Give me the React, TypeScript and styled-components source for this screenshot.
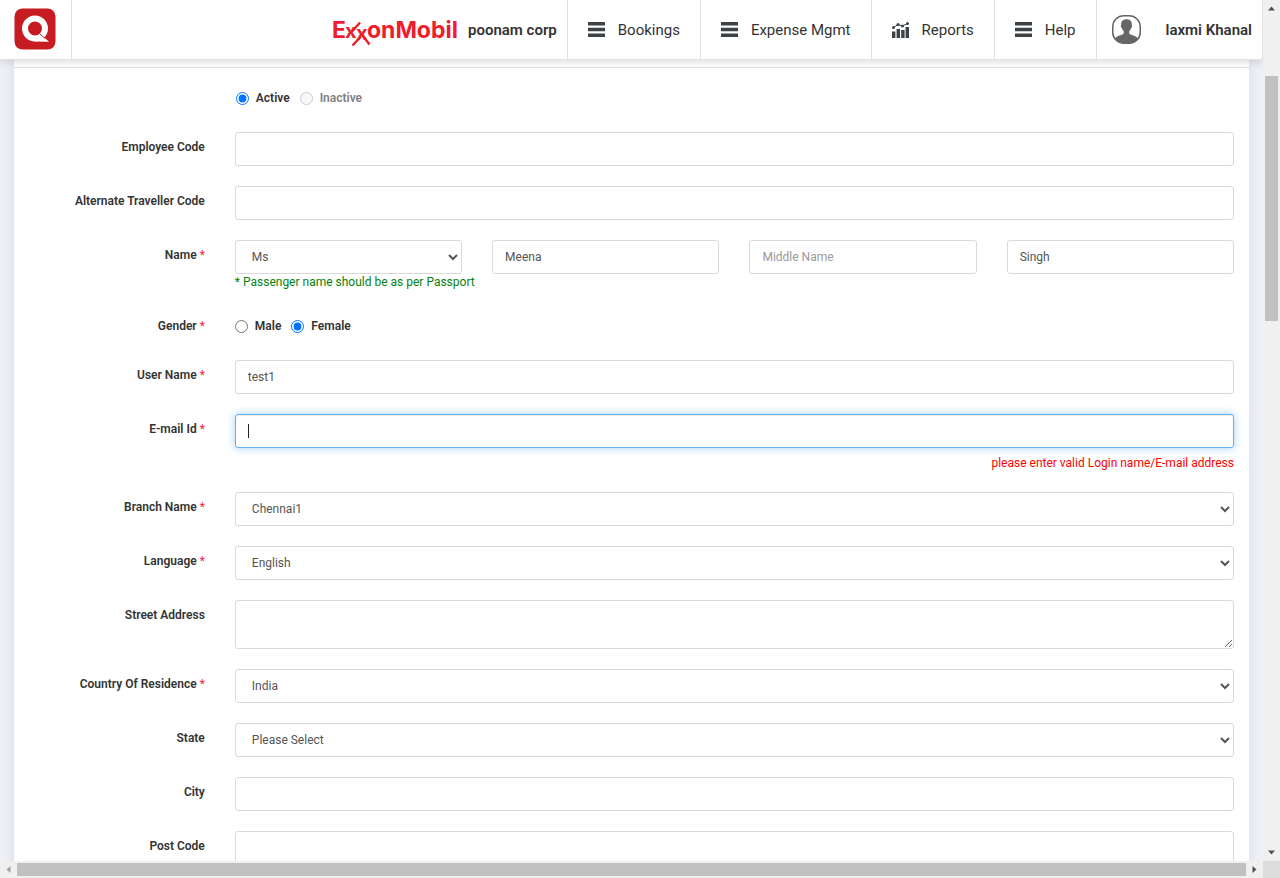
import React from 'react';
import styled, { createGlobalStyle } from 'styled-components';

const GlobalStyle = createGlobalStyle`
  * { box-sizing: border-box; }
  body {
    margin: 0;
    font-family: Roboto, "Liberation Sans", sans-serif;
    font-size: 12px;
    line-height: 18px;
    color: #333;
  }
`;

const Shell = styled.div`
  display: grid;
  grid-template-columns: minmax(0, 1fr) 17px;
  grid-template-rows: minmax(0, 1fr) 17px;
  height: 100vh;
  background: #f0f0f0;
`;

const Page = styled.div`
  display: flex;
  flex-direction: column;
  overflow: hidden;
  background: #f0f1f6;
`;

const Header = styled.header`
  flex: none;
  display: flex;
  height: 60px;
  background: #fff;
  border-bottom: 1px solid #e1e1e4;
  border-right: 1px solid #e1e1e4;
  box-shadow: 0 2px 8px rgba(0, 0, 0, 0.14);
  z-index: 1;
`;

const Home = styled.a`
  display: flex;
  align-items: center;
  padding: 0 15px 2px 14px;
  border-right: 1px solid #e1e1e4;
`;

const Company = styled.div`
  display: flex;
  align-items: center;
  gap: 9px;
  margin-left: auto;
  padding-right: 10px;
  font-size: 15px;
  font-weight: 600;
`;

const Nav = styled.nav`
  display: flex;
`;

const NavLink = styled.a<{ $user?: boolean }>`
  display: flex;
  align-items: center;
  gap: ${(p) => (p.$user ? 25 : 13)}px;
  padding: ${(p) => (p.$user ? '0 10px 0 15px' : '0 20px')};
  border-left: 1px solid #e1e1e4;
  color: #333;
  font-size: 15px;
  font-weight: ${(p) => (p.$user ? 600 : 400)};
  text-decoration: none;
  white-space: nowrap;
`;

const Panel = styled.main`
  flex: 1 0 auto;
  margin: 0 14px;
  background: #fff;
  box-shadow: 0 0 14px rgba(60, 70, 90, 0.12);
`;

const PanelTop = styled.div`
  height: 8px;
  border-bottom: 1px solid #dee0e2;
`;

const Form = styled.form`
  display: flex;
  flex-direction: column;
  gap: 20px;
  padding: 16px 0;
`;

const Row = styled.div<{ $center?: boolean }>`
  display: grid;
  grid-template-columns: minmax(0, 1fr) minmax(0, 5fr);
  align-items: ${(p) => (p.$center ? 'center' : 'start')};
  min-height: 28px;
`;

const Label = styled.label<{ $center?: boolean }>`
  padding: ${(p) => (p.$center ? 0 : 6)}px 15px 0;
  font-weight: 600;
  text-align: right;
`;

const Star = styled.span`
  color: #ff1a3c;
  font-weight: 400;
`;

const Field = styled.div`
  padding: 0 15px;
`;

const NameGrid = styled.div`
  display: grid;
  grid-template-columns: repeat(4, minmax(0, 1fr));
  gap: 30px;
`;

const control = `
  display: block;
  width: 100%;
  height: 34px;
  padding: 6px 12px;
  border: 1px solid #d9d9d9;
  border-radius: 3px;
  background: #fff;
  color: #555;
  font-family: inherit;
  font-size: 12px;
  line-height: 18px;
  outline: none;
`;

const Input = styled.input<{ $active?: boolean }>`
  ${control}
  ${(p) =>
    p.$active &&
    'border-color: #66afe9; box-shadow: inset 0 1px 1px rgba(0,0,0,.075), 0 0 8px rgba(102,175,233,.6); caret-color: transparent;'}
  &::placeholder { color: #999; }
`;

const Select = styled.select`
  ${control}
`;

const TextArea = styled.textarea`
  ${control}
  height: 49px;
  resize: vertical;
`;

const CaretBox = styled.div`
  position: relative;
`;

const Caret = styled.span`
  position: absolute;
  left: 13px;
  top: 10px;
  width: 1px;
  height: 14px;
  background: #222;
`;

const Hint = styled.div`
  padding-bottom: 2px;
  color: #087f0c;
  line-height: 16px;
`;

const ErrorText = styled.div`
  margin-top: 6px;
  color: #f00;
  text-align: right;
`;

const Radios = styled.div<{ $inset?: boolean }>`
  display: flex;
  gap: 10px;
  padding-left: ${(p) => (p.$inset ? 1 : 0)}px;
`;

const RadioLabel = styled.label<{ $off?: boolean }>`
  display: flex;
  align-items: center;
  gap: 7px;
  font-weight: 600;
  color: ${(p) => (p.$off ? '#808080' : '#333')};
`;

const Radio = styled.input`
  width: 13px;
  height: 13px;
  margin: 1px 0 0;
`;

const Bar = styled.div<{ $vertical?: boolean }>`
  display: flex;
  flex-direction: ${(p) => (p.$vertical ? 'column' : 'row')};
  background: #f0f0f0;
`;

const ArrowButton = styled.button`
  flex: none;
  display: flex;
  align-items: center;
  justify-content: center;
  width: 17px;
  height: 17px;
  padding: 0;
  border: 0;
  background: none;
`;

const Space = styled.div<{ $grow: number }>`
  flex: ${(p) => p.$grow} 0 0;
`;

const Thumb = styled.div<{ $grow: number; $vertical?: boolean }>`
  flex: ${(p) => p.$grow} 0 0;
  margin: ${(p) => (p.$vertical ? '0 2px' : '2px 0')};
  background: #c1c1c1;
`;

const Corner = styled.div`
  background: #dcdcdc;
`;

const Arrow = ({ turn, faded }: { turn: number; faded?: boolean }) => (
  <svg width="9" height="9" viewBox="0 0 9 9" aria-hidden="true">
    <path d="M1 6.5 4.5 2.5 8 6.5Z" fill={faded ? '#a3a3a3' : '#505050'} transform={`rotate(${turn} 4.5 4.5)`} />
  </svg>
);

const QLogo = () => (
  <svg width="42" height="42" viewBox="0 0 42 42" aria-hidden="true">
    <rect x="0.5" y="0.5" width="41" height="41" rx="8" fill="#c61b20" />
    <circle cx="21" cy="20.5" r="10" fill="none" stroke="#fff" strokeWidth="6" />
    <path d="M21 33.500 27 26.500 35 33.800Z" fill="#fff" />
    <path d="M25.5 25.5 31 30.5" stroke="#c61b20" strokeWidth="1" />
  </svg>
);

const BrandLogo = () => (
  <svg width="127" height="36" viewBox="0 0 127 36" role="img" aria-label="ExxonMobil" fill="#ee1c2e" fontFamily="Inter, sans-serif" fontWeight="700" fontSize="23">
    <text x="0" y="26">E</text>
    <text x="13" y="26" fontSize="20">x</text>
    <text x="24" y="28" fontSize="20">x</text>
    <text x="35" y="26">onMobil</text>
    <path d="M20.500 19 28 10.500M28.500 25 20.500 33.500M31 24 37.500 32.500" fill="none" stroke="#ee1c2e" strokeWidth="2.400" />
  </svg>
);

const MenuIcon = () => (
  <svg width="17" height="15" viewBox="0 0 17 15" fill="#3c4245" aria-hidden="true">
    <path d="M0 0h17v3.400H0zM0 5.800h17v3.400H0zM0 11.600h17v3.400H0z" />
  </svg>
);

const ChartIcon = () => (
  <svg width="17" height="16" viewBox="0 0 17 16" fill="#3c4245" aria-hidden="true">
    <path d="M0 9.500h3.400v6.500H0zM4.600 7h3.400v9h-3.400zM9.200 8h3.400v8h-3.400zM13.600 5h3.400V16h-3.400z" />
    <path d="M1.500 5.500 6 2.500 10.500 4 15.500 1.500" fill="none" stroke="#3c4245" />
    <circle cx="1.500" cy="5.500" r="1.500" /><circle cx="6" cy="2.500" r="1.500" />
    <circle cx="10.500" cy="4" r="1.500" /><circle cx="15.500" cy="1.500" r="1.500" />
  </svg>
);

const UserIcon = () => (
  <svg width="29" height="29" viewBox="0 0 29 29" aria-hidden="true">
    <rect x="0.750" y="0.750" width="27.500" height="27.500" rx="11" fill="#fff" stroke="#666" strokeWidth="1.500" />
    <path d="M14.500 4.200c-3.800 0-5.700 2.400-5.300 5.800-.8.400-.3 2.600.7 3 .4 1.500 1 2.500 1.800 3.200v2.600c-2.200 1.600-6.400 1.800-8.700 4.600C5.200 27 8.500 28 11.500 28h6c3 0 6.300-1 8.500-4.600-2.300-2.800-6.500-3-8.700-4.600v-2.600c.8-.7 1.400-1.700 1.800-3.200 1-.4 1.500-2.600.7-3 .4-3.400-1.500-5.800-5.300-5.800Z" fill="#666" />
  </svg>
);

const Required = () => <Star> *</Star>;

type FieldRowProps = {
  id: string;
  label: string;
  required?: boolean;
  value?: string;
  options?: string[];
};

const FieldRow = ({ id, label, required, value, options }: FieldRowProps) => (
  <Row>
    <Label htmlFor={id}>{label}{required && <Required />}</Label>
    <Field>
      {options ? (
        <Select id={id}>{options.map((o) => <option key={o}>{o}</option>)}</Select>
      ) : (
        <Input id={id} type="text" defaultValue={value} />
      )}
    </Field>
  </Row>
);

export default function App() {
  return (
    <Shell>
      <GlobalStyle />
      <Page>
        <Header>
          <Home href="#" aria-label="Home"><QLogo /></Home>
          <Company><BrandLogo />poonam corp</Company>
          <Nav>
            <NavLink href="#"><MenuIcon />Bookings</NavLink>
            <NavLink href="#"><MenuIcon />Expense Mgmt</NavLink>
            <NavLink href="#"><ChartIcon />Reports</NavLink>
            <NavLink href="#"><MenuIcon />Help</NavLink>
            <NavLink href="#" $user><UserIcon />laxmi Khanal</NavLink>
          </Nav>
        </Header>
        <Panel>
          <PanelTop />
          <Form>
            <Row $center>
              <span />
              <Field>
                <Radios $inset>
                  <RadioLabel><Radio type="radio" name="status" defaultChecked />Active</RadioLabel>
                  <RadioLabel $off><Radio type="radio" name="status" disabled />Inactive</RadioLabel>
                </Radios>
              </Field>
            </Row>
            <FieldRow id="code" label="Employee Code" />
            <FieldRow id="altCode" label="Alternate Traveller Code" />
            <Row>
              <Label htmlFor="title">Name<Required /></Label>
              <Field>
                <NameGrid>
                  <Select id="title"><option>Ms</option><option>Mr</option></Select>
                  <Input type="text" aria-label="First Name" defaultValue="Meena" />
                  <Input type="text" aria-label="Middle Name" placeholder="Middle Name" />
                  <Input type="text" aria-label="Last Name" defaultValue="Singh" />
                </NameGrid>
                <Hint>* Passenger name should be as per Passport</Hint>
              </Field>
            </Row>
            <Row $center>
              <Label as="span" $center id="gender">Gender<Required /></Label>
              <Field>
                <Radios role="radiogroup" aria-labelledby="gender">
                  <RadioLabel><Radio type="radio" name="gender" />Male</RadioLabel>
                  <RadioLabel><Radio type="radio" name="gender" defaultChecked />Female</RadioLabel>
                </Radios>
              </Field>
            </Row>
            <FieldRow id="user" label="User Name" required value="test1" />
            <Row>
              <Label htmlFor="email">E-mail Id<Required /></Label>
              <Field>
                <CaretBox>
                  <Input id="email" type="text" $active />
                  <Caret />
                </CaretBox>
                <ErrorText>please enter valid Login name/E-mail address</ErrorText>
              </Field>
            </Row>
            <FieldRow id="branch" label="Branch Name" required options={['Chennai1']} />
            <FieldRow id="language" label="Language" required options={['English']} />
            <Row>
              <Label htmlFor="street">Street Address</Label>
              <Field><TextArea id="street" /></Field>
            </Row>
            <FieldRow id="country" label="Country Of Residence" required options={['India']} />
            <FieldRow id="state" label="State" options={['Please Select']} />
            <FieldRow id="city" label="City" />
            <FieldRow id="post" label="Post Code" />
          </Form>
        </Panel>
      </Page>
      <Bar $vertical>
        <ArrowButton aria-label="Scroll up"><Arrow turn={0} /></ArrowButton>
        <Space $grow={59} />
        <Thumb $vertical $grow={245} />
        <Space $grow={523} />
        <ArrowButton aria-label="Scroll down"><Arrow turn={180} /></ArrowButton>
      </Bar>
      <Bar>
        <ArrowButton aria-label="Scroll left"><Arrow turn={270} faded /></ArrowButton>
        <Thumb $grow={1228} />
        <ArrowButton aria-label="Scroll right"><Arrow turn={90} /></ArrowButton>
      </Bar>
      <Corner />
    </Shell>
  );
}
